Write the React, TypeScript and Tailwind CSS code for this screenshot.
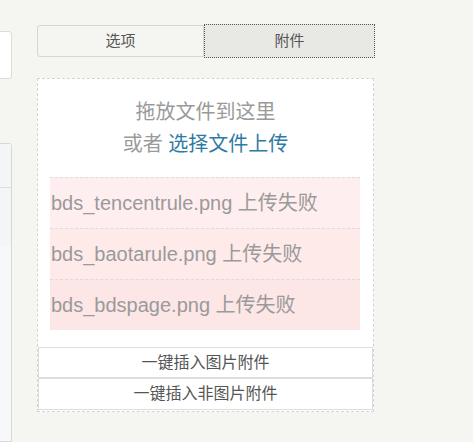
import React from "react";

const font = { fontFamily: '"Liberation Sans", "Noto Sans CJK SC", sans-serif' };

export default function App() {
  const files = [
    { name: "bds_tencentrule.png", bg: "bg-[#ffeeef]" },
    { name: "bds_baotarule.png", bg: "bg-[#ffeaea]" },
    { name: "bds_bdspage.png", bg: "bg-[#fde6e6]" },
  ];
  return (
    <div className="w-[473px] h-[442px] bg-[#f5f5f1] flex overflow-hidden" style={font}>
      <div className="w-[12px] shrink-0 flex flex-col">
        <div className="mt-[31px] h-[48px] -ml-[10px] w-[22px] bg-white border border-[#dcdcd8] rounded-[3px]" />
        <div className="mt-[64px] flex-1 -ml-[10px] w-[22px] bg-[#f7f8fa] border border-[#d8d8d4] rounded-tr-[3px] flex flex-col">
          <div className="h-[44px] border-b border-[#dedede] bg-[#f4f5f7]" />
          <div className="h-[58px] bg-[#f4f5f7]" />
        </div>
      </div>
      <div className="ml-[25px] w-[338px] flex flex-col">
        <div className="mt-[24px] h-[34px] flex">
          <div className="mt-[1px] h-[32px] w-[167px] border border-[#d6d6d2] rounded-l-[3px] bg-[#f5f5f1] flex items-center justify-center text-[15px] text-[#555]">
            选项
          </div>
          <div className="h-[34px] flex-1 bg-[#e8e8e4] border border-dotted border-[#555] flex items-center justify-center text-[15px] text-[#555]">
            附件
          </div>
        </div>
        <div className="mt-[20px] w-[337px] h-[334px] bg-white border border-dashed border-[#d4d4d4] flex flex-col">
          <div className="pt-[17px] text-center text-[20px] leading-[32px] text-[#9a9a9a]">
            <div>拖放文件到这里</div>
            <div>
              或者 <span className="text-[#2f7aa2]">选择文件上传</span>
            </div>
          </div>
          <div className="mt-[17px] ml-[12px] w-[310px] flex flex-col">
            {files.map((f) => (
              <div
                key={f.name}
                className={`h-[51px] ${f.bg} border-t border-dashed border-[#dcdcdc] flex items-center pl-[1px] text-[20px] text-[#9a9a9a]`}
              >
                {f.name} 上传失败
              </div>
            ))}
          </div>
          <div className="mt-[17px] flex flex-col">
            <div className="h-[32px] border border-[#dddddd] border-b-2 flex items-center justify-center text-[16px] text-[#555]">
              一键插入图片附件
            </div>
            <div className="h-[31px] border border-[#dddddd] border-t-0 flex items-center justify-center text-[16px] text-[#555]">
              一键插入非图片附件
            </div>
          </div>
        </div>
      </div>
    </div>
  );
}
